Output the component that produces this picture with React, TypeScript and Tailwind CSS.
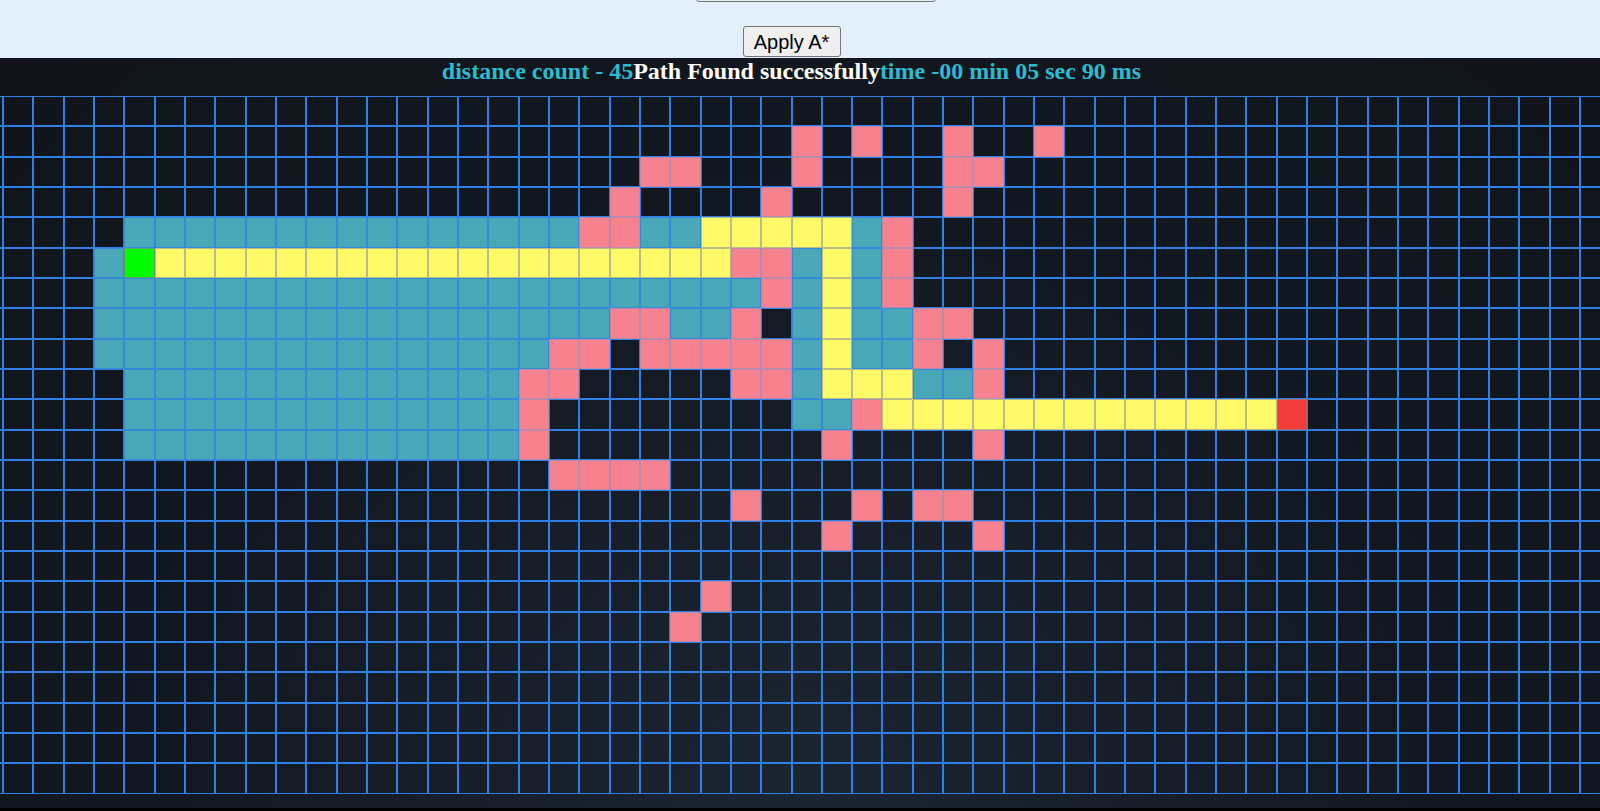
import React from 'react';

type Kind = 'empty' | 'wall' | 'visited' | 'path' | 'start' | 'end';

const ROWS = 23;
const COLS = 54; // first and last column are cut off by the window

// [row, fromCol, toCol]
const visited: [number, number, number][] = [
  [4, 4, 18], [4, 21, 22], [4, 28, 28],
  [5, 3, 3], [5, 26, 26], [5, 28, 28],
  [6, 3, 24], [6, 26, 26], [6, 28, 28],
  [7, 3, 19], [7, 22, 23], [7, 26, 26], [7, 28, 29],
  [8, 3, 17], [8, 26, 26], [8, 28, 29],
  [9, 4, 16], [9, 26, 26], [9, 30, 31],
  [10, 4, 16], [10, 26, 27],
  [11, 4, 16],
];

const path: [number, number, number][] = [
  [4, 23, 27],
  [5, 5, 23], [5, 27, 27],
  [6, 27, 27], [7, 27, 27], [8, 27, 27],
  [9, 27, 29],
  [10, 29, 41],
];

const walls: [number, number, number][] = [
  [1, 26, 26], [1, 28, 28], [1, 31, 31], [1, 34, 34],
  [2, 21, 22], [2, 26, 26], [2, 31, 32],
  [3, 20, 20], [3, 25, 25], [3, 31, 31],
  [4, 19, 20], [4, 29, 29],
  [5, 24, 25], [5, 29, 29],
  [6, 25, 25], [6, 29, 29],
  [7, 20, 21], [7, 24, 24], [7, 30, 31],
  [8, 18, 19], [8, 21, 25], [8, 30, 30], [8, 32, 32],
  [9, 17, 18], [9, 24, 25], [9, 32, 32],
  [10, 17, 17], [10, 28, 28],
  [11, 17, 17], [11, 27, 27], [11, 32, 32],
  [12, 18, 21],
  [13, 24, 24], [13, 28, 28], [13, 30, 31],
  [14, 27, 27], [14, 32, 32],
  [16, 23, 23],
  [17, 22, 22],
];

const buildBoard = (): Kind[][] => {
  const board: Kind[][] = Array.from({ length: ROWS }, () => Array(COLS).fill('empty'));
  const paint = (list: [number, number, number][], kind: Kind) => {
    list.forEach(([r, a, b]) => {
      for (let c = a; c <= b; c++) board[r][c + 1] = kind;
    });
  };
  paint(visited, 'visited');
  paint(walls, 'wall');
  paint(path, 'path');
  board[5][4 + 1] = 'start';
  board[10][42 + 1] = 'end';
  return board;
};

const cellClass: Record<Kind, string> = {
  empty: 'border-[#2f7fe6]',
  visited: 'bg-[#49a7b8] border-[#3489d8]',
  path: 'bg-[#fffb68] border-[#b9bc86]',
  wall: 'bg-[#f7828f] border-[#b98aa9]',
  start: 'bg-[#00fb00] border-[#5aa06a]',
  end: 'bg-[#f23b3b] border-[#b46a6a]',
};

const board = buildBoard();

export default function App() {
  return (
    <div className="w-[1600px] h-[811px] overflow-hidden flex flex-col bg-black">
      <div className="h-[58px] w-full bg-[#e3f0fb] shrink-0">
        <div className="w-[1583px] flex flex-col items-center">
          <div className="w-[240px] h-[22px] -mt-[20px] ml-[49px] border border-[#767676] rounded-[3px]" />
          <button className="mt-[24px] w-[98px] h-[31px] bg-[#efefef] border border-[#767676] rounded-[3px] text-[20px] leading-none text-black font-['Liberation_Sans',Arial,sans-serif]">
            Apply A*
          </button>
        </div>
      </div>
      <div className="h-[750px] w-full shrink-0 bg-[radial-gradient(ellipse_at_50%_100%,#1b2532_0%,#131820_55%,#10141a_100%)]">
        <div className="w-[1583px] flex flex-col items-center">
          <div className="h-[38px] text-[24px] leading-[26px] font-bold font-['Liberation_Serif','Times_New_Roman',serif] whitespace-nowrap">
            <span className="text-[#2bbccf]">distance count - 45</span>
            <span className="text-white">Path Found successfully</span>
            <span className="text-[#2bbccf]">time -00 min 05 sec 90 ms</span>
          </div>
          <div className="w-full flex justify-center">
            <div className="shrink-0 grid grid-cols-[repeat(54,30.33px)] auto-rows-[30.33px]">
              {board.map((row, r) =>
                row.map((kind, c) => (
                  <div key={`${r}-${c}`} className={`border ${cellClass[kind]}`} />
                ))
              )}
            </div>
          </div>
        </div>
      </div>
      <div className="h-[3px] w-full bg-black" />
    </div>
  );
}
